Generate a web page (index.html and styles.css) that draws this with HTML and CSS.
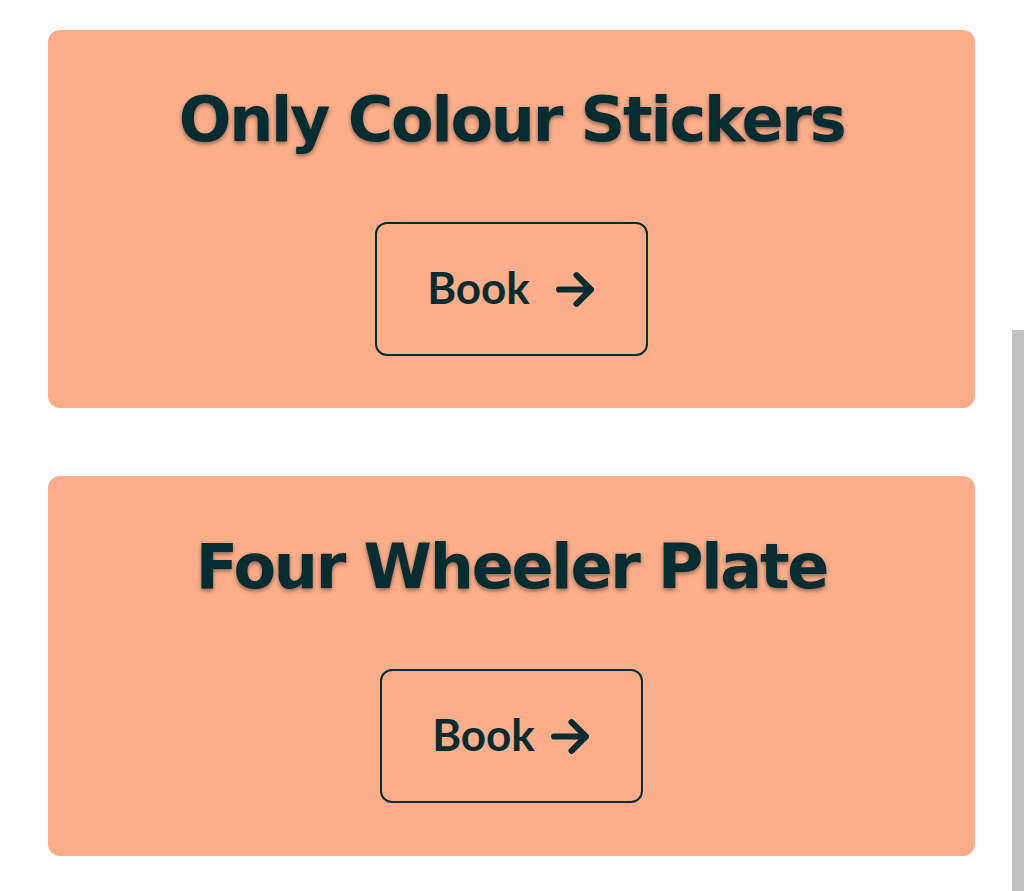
FILE: index.html
```html
<!DOCTYPE html>
<html lang="en">
<head>
<meta charset="utf-8">
<title>Plates</title>
<link rel="stylesheet" href="styles.css">
</head>
<body>
<main class="list">
  <section class="card">
    <h2 class="card-title">Only Colour Stickers</h2>
    <a class="book-btn book-btn--wide" href="#">
      <span class="book-label">Book</span>
      <svg class="book-arrow" viewBox="0 0 40 36" aria-hidden="true"><path d="M4 18H35M21 4L35 18L21 32" fill="none" stroke="currentColor" stroke-width="6" stroke-linecap="round" stroke-linejoin="round"/></svg>
    </a>
  </section>
  <section class="card card--tall">
    <h2 class="card-title">Four Wheeler Plate</h2>
    <a class="book-btn" href="#">
      <span class="book-label">Book</span>
      <svg class="book-arrow" viewBox="0 0 40 36" aria-hidden="true"><path d="M4 18H35M21 4L35 18L21 32" fill="none" stroke="currentColor" stroke-width="6" stroke-linecap="round" stroke-linejoin="round"/></svg>
    </a>
  </section>
</main>
<div class="scroll-track"></div>
</body>
</html>
```
FILE: styles.css
```css
html, body {
  margin: 0;
  padding: 0;
  background: #ffffff;
}
body {
  font-family: "Lato", "Liberation Sans", sans-serif;
  color: #052c31;
}
.list {
  display: flex;
  flex-direction: column;
  gap: 68px;
  padding: 30px 48px 0 48px;
  width: 927px;
}
.card {
  background: #fcae8a;
  border-radius: 12px;
  display: flex;
  flex-direction: column;
  align-items: center;
  padding: 50px 0 52px 0;
}
.card--tall {
  padding: 51px 0 53px 0;
}
.card-title {
  margin: 0 0 62px 0;
  font-family: "DejaVu Sans", "Liberation Sans", sans-serif;
  font-weight: 700;
  font-size: 62px;
  line-height: 80px;
  letter-spacing: -2.2px;
  color: #052c31;
  text-shadow: 0 2px 4px rgba(0, 0, 0, 0.45);
}
.book-btn {
  display: flex;
  align-items: center;
  gap: 15px;
  padding: 0 50px;
  height: 130px;
  border: 2px solid #052c31;
  border-radius: 12px;
  color: #052c31;
  text-decoration: none;
}
.book-btn--wide {
  gap: 25px;
}
.book-label {
  font-family: "Lato", sans-serif;
  font-weight: 700;
  font-size: 44px;
  line-height: 1;
  padding-bottom: 4px;
}
.book-arrow {
  width: 41px;
  height: 37px;
}
.scroll-track {
  position: fixed;
  right: 0;
  top: 330px;
  bottom: 0;
  width: 12px;
  background: #c1c1c1;
}
```
